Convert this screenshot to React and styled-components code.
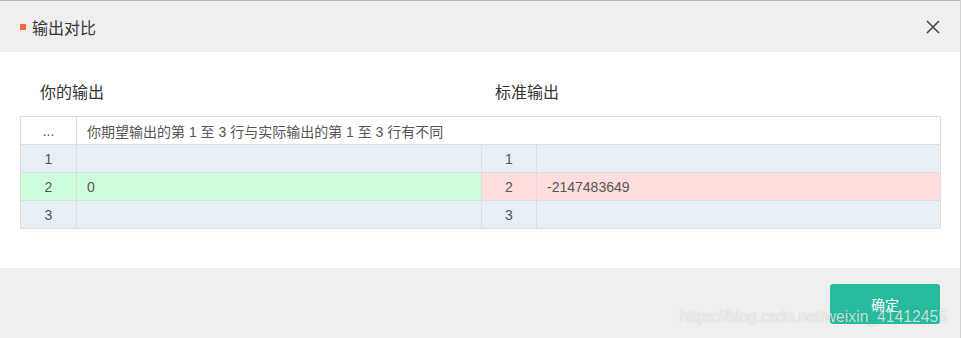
import React from "react"
import styled, { createGlobalStyle } from "styled-components"

const GlobalStyle = createGlobalStyle`
  html, body {
    margin: 0;
    padding: 0;
    background: #efefef;
    font-family: Arial, "Liberation Sans", "Noto Sans CJK SC", sans-serif;
  }
`

const Dialog = styled.div`
  width: 960px;
  height: 338px;
  border-right: 1px solid #cfcfcf;
  display: flex;
  flex-direction: column;
  overflow: hidden;
  background: #efefef;
`

const Header = styled.div`
  border-top: 1px solid #b9b9b9;
  box-sizing: border-box;
  height: 52px;
  display: flex;
  align-items: center;
  justify-content: space-between;
  padding: 0 20px 0 20px;
`

const Title = styled.div`
  display: flex;
  align-items: center;
  gap: 6px;
  font-size: 16px;
  color: #333;
  font-family: "Liberation Sans", "Noto Sans CJK SC", sans-serif;
`

const Mark = styled.span`
  width: 6px;
  height: 6px;
  background: #ff6340;
`

const Close = styled.button`
  border: 0;
  background: none;
  padding: 0;
  width: 14px;
  height: 14px;
  display: flex;
  cursor: pointer;
`

const Body = styled.div`
  background: #fff;
  height: 216px;
  padding: 0 20px;
  box-sizing: border-box;
`

const Headings = styled.div`
  display: grid;
  grid-template-columns: 461px 1fr;
  height: 64px;
  align-items: center;
`

const Heading = styled.div`
  font-size: 16px;
  color: #333;
  padding-left: ${p => p.$pad}px;
  padding-top: 14px;
  font-family: "Liberation Sans", "Noto Sans CJK SC", sans-serif;
`

const Table = styled.table`
  width: 920px;
  border-collapse: collapse;
  table-layout: fixed;
  font-size: 14px;
  color: #555;
  font-family: "Liberation Sans", "Noto Sans CJK SC", sans-serif;
`

const Row = styled.tr`
  height: 28px;
  background: ${p => p.$bg || "#fff"};
`

const Num = styled.td`
  border: 1px solid #ddd;
  text-align: center;
  padding: 0;
  background: ${p => p.$bg || "transparent"};
`

const Cell = styled.td`
  border: 1px solid #ddd;
  padding: 0 0 0 10px;
  background: ${p => p.$bg || "transparent"};
  white-space: nowrap;
`

const Footer = styled.div`
  flex: 1;
  position: relative;
  display: flex;
  justify-content: flex-end;
  align-items: flex-start;
  padding: 16px 20px 0 0;
`

const Button = styled.button`
  width: 110px;
  height: 40px;
  border: 0;
  border-radius: 3px;
  background: #26bb9c;
  color: #fff;
  font-size: 14px;
  font-family: "Liberation Sans", "Noto Sans CJK SC", sans-serif;
`

const Watermark = styled.div`
  position: absolute;
  left: 680px;
  top: 40px;
  font-size: 15.7px;
  color: rgba(255, 255, 255, 0.75);
  text-shadow: 0 0 1px rgba(0, 0, 0, 0.25);
  font-family: Arial, "Liberation Sans", sans-serif;
  pointer-events: none;
`

const BLUE = "#e6eef6"

const rows = [
  { n: 1, mine: "", std: "", left: BLUE, right: BLUE },
  { n: 2, mine: "0", std: "-2147483649", left: "#ccfedb", right: "#ffdddd" },
  { n: 3, mine: "", std: "", left: BLUE, right: BLUE },
]

export default function App() {
  return (
    <>
      <GlobalStyle />
      <Dialog>
        <Header>
          <Title>
            <Mark />
            输出对比
          </Title>
          <Close aria-label="close">
            <svg width="14" height="14" viewBox="0 0 14 14">
              <path d="M1 1L13 13M13 1L1 13" stroke="#3a4a5a" strokeWidth="1.6" />
            </svg>
          </Close>
        </Header>
        <Body>
          <Headings>
            <Heading $pad={20}>你的输出</Heading>
            <Heading $pad={14}>标准输出</Heading>
          </Headings>
          <Table>
            <colgroup>
              <col style={{ width: 56 }} />
              <col style={{ width: 405 }} />
              <col style={{ width: 55 }} />
              <col style={{ width: 404 }} />
            </colgroup>
            <tbody>
              <Row>
                <Num>...</Num>
                <Cell colSpan={3}>你期望输出的第 1 至 3 行与实际输出的第 1 至 3 行有不同</Cell>
              </Row>
              {rows.map(r => (
                <Row key={r.n}>
                  <Num $bg={r.left}>{r.n}</Num>
                  <Cell $bg={r.left}>{r.mine}</Cell>
                  <Num $bg={r.right}>{r.n}</Num>
                  <Cell $bg={r.right}>{r.std}</Cell>
                </Row>
              ))}
            </tbody>
          </Table>
        </Body>
        <Footer>
          <Button>确定</Button>
          <Watermark>https://blog.csdn.net/weixin_41412455</Watermark>
        </Footer>
      </Dialog>
    </>
  )
}
